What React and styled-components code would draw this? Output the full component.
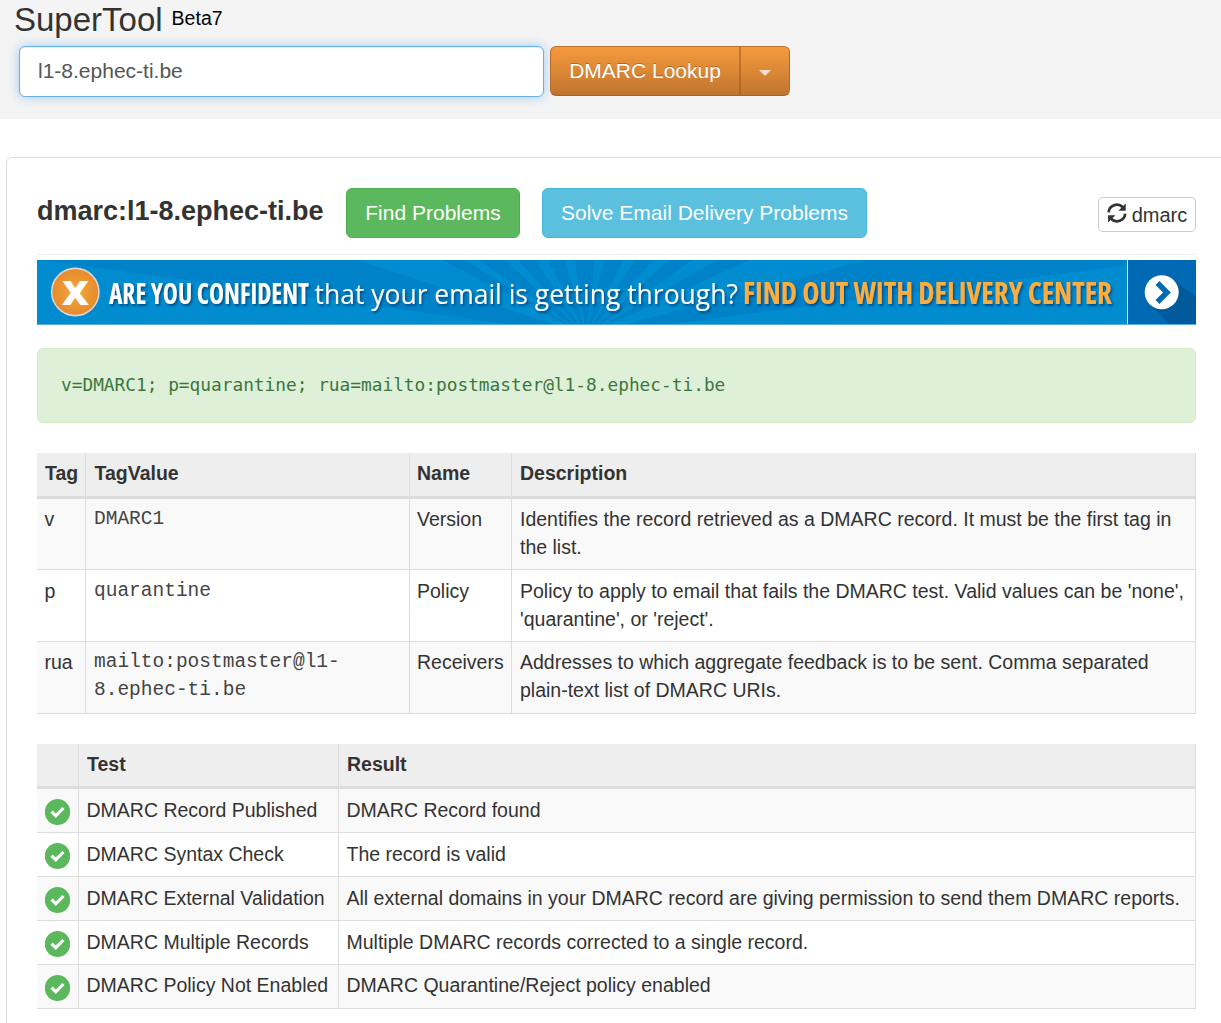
import React, { useLayoutEffect, useRef, useState } from "react";
import styled, { createGlobalStyle } from "styled-components";

const GlobalStyle = createGlobalStyle`
  * { box-sizing: border-box; }
  html, body { margin: 0; padding: 0; background: #fff; overflow: hidden; }
  body { font-family: "Liberation Sans", Arial, sans-serif; font-size: 19.5px; color: #333; }
`;

const Page = styled.div`
  display: flex;
  flex-direction: column;
  height: 1023px;
  overflow: hidden;
`;

const Header = styled.header`
  flex: none;
  height: 119px;
  background: #f4f4f4;
`;

const TitleRow = styled.div`
  display: flex;
  align-items: flex-start;
  gap: 9px;
  height: 46px;
  padding: 2px 0 0 14px;
`;

const Title = styled.h1`
  margin: 0;
  font-size: 33px;
  font-weight: 400;
  line-height: 36px;
`;

const Beta = styled.span`
  color: #000;
  line-height: 32px;
`;

const SearchRow = styled.div`
  display: flex;
  align-items: flex-start;
  gap: 6px;
  padding-left: 19px;
`;

const SearchInput = styled.input`
  width: 525px;
  height: 51px;
  padding: 0 18px 1px;
  border: 1px solid #66afe9;
  border-radius: 6px;
  outline: none;
  background: #fff;
  color: #555;
  font: 21px "Liberation Sans", Arial, sans-serif;
  box-shadow: inset 0 1px 1px rgba(0, 0, 0, 0.075), 0 0 12px rgba(102, 175, 233, 0.6);
`;

const SplitButton = styled.div`
  display: flex;
  width: 240px;
  height: 50px;
  border: 1px solid;
  border-color: #bd732f #b56c2b #a5622a;
  border-radius: 6px;
  overflow: hidden;
  background: linear-gradient(#f79a3c, #c0752f);
`;

const LookupButton = styled.button`
  width: 190px;
  padding: 0;
  border: 0;
  border-right: 2px solid rgba(150, 85, 30, 0.5);
  background: none;
  color: #fff;
  font: 21px "Liberation Sans", Arial, sans-serif;
  text-shadow: 0 -1px 0 rgba(0, 0, 0, 0.25);
`;

const CaretButton = styled.button`
  flex: 1;
  display: flex;
  align-items: center;
  justify-content: center;
  padding: 4px 0 0;
  border: 0;
  background: none;

  &::after {
    content: "";
    border: 6px solid transparent;
    border-top-color: rgba(255, 255, 255, 0.75);
    border-bottom: 0;
  }
`;

const Panel = styled.main`
  flex: 1;
  margin: 38px -10px -10px 6px;
  padding: 30px 34px 0 30px;
  border: 1px solid #ddd;
  border-radius: 6px;
`;

const PanelHead = styled.div`
  display: flex;
  align-items: center;
  height: 50px;
`;

const Domain = styled.h2`
  width: 309px;
  margin: 0;
  padding-bottom: 3px;
  font-size: 27px;
  font-weight: 700;
  white-space: nowrap;
`;

const ActionButton = styled.button`
  width: ${(p) => p.$width}px;
  height: 50px;
  margin-right: 22px;
  padding: 0;
  border: 1px solid ${(p) => (p.$kind === "success" ? "#4cae4c" : "#46b8da")};
  border-radius: 6px;
  background: ${(p) => (p.$kind === "success" ? "#5cb85c" : "#5bc0de")};
  color: #fff;
  font: 21px "Liberation Sans", Arial, sans-serif;
  white-space: nowrap;
`;

const RefreshButton = styled.button`
  display: flex;
  align-items: center;
  justify-content: center;
  gap: 5px;
  width: 98px;
  height: 35px;
  margin: 3px 0 0 auto;
  padding: 0;
  border: 1px solid #ccc;
  border-radius: 5px;
  background: #fff;
  color: #333;
  font: 20px "Liberation Sans", Arial, sans-serif;

  svg { margin-top: -3px; }
  span { padding-top: 1px; }
`;

const Divider = styled.hr`
  height: 1px;
  margin: 16px 0 5px;
  border: 0;
  background: #eee;
`;

const BannerArt = styled.svg`
  display: block;
  width: 1159px;
  height: 65px;
  font-family: "Open Sans", sans-serif;
`;

const BannerLabel = styled.text`
  font-size: ${(p) => p.$size}px;
  font-weight: ${(p) => p.$weight};
  font-stretch: ${(p) => (p.$condensed ? "75%" : "100%")};
  fill: ${(p) => p.$color || "#fff"};
`;

const RecordBox = styled.div`
  display: flex;
  align-items: center;
  height: 75px;
  margin: 23px 0 30px;
  padding: 0 23px 3px;
  border: 1px solid #d6e9c6;
  border-radius: 6px;
  background: #dff0d8;
  color: #3c763d;
  font-family: "DejaVu Sans Mono", monospace;
  font-size: 17.81px;
  white-space: pre;
`;

const Table = styled.div`
  margin-bottom: 30px;
  line-height: 28px;
`;

const Row = styled.div`
  display: grid;
  grid-template-columns: ${(p) => p.$columns};
  height: ${(p) => p.$height}px;
  border-bottom: 1px solid #ddd;
  background: ${(p) => (p.$striped ? "#f9f9f9" : "#fff")};
`;

const HeadRow = styled(Row)`
  border-bottom-width: 3px;
  background: #eee;
  font-weight: 700;
`;

const Cell = styled.div`
  padding: ${(p) => p.$top || 6}px 4px 0 ${(p) => p.$left || 7.5}px;
  border-right: 1px solid #ddd;
  white-space: pre;
`;

const CodeCell = styled(Cell)`
  color: #444;
  font-family: "Liberation Mono", "Courier New", monospace;
`;

const IconCell = styled(Cell)`
  display: flex;
  align-items: flex-start;
  padding: ${(p) => p.$top}px 0 0 8px;
`;

const TAG_COLUMNS = "49px 324px 102px 684px";
const TEST_COLUMNS = "42px 260px 857px";

const tags = [
  { tag: "v", value: "DMARC1", name: "Version", height: 71, top: 6,
    text: "Identifies the record retrieved as a DMARC record. It must be the first tag in\nthe list." },
  { tag: "p", value: "quarantine", name: "Policy", height: 72, top: 7,
    text: "Policy to apply to email that fails the DMARC test. Valid values can be 'none',\n'quarantine', or 'reject'." },
  { tag: "rua", value: "mailto:postmaster@l1-\n8.ephec-ti.be", name: "Receivers", height: 72, top: 6,
    text: "Addresses to which aggregate feedback is to be sent. Comma separated\nplain-text list of DMARC URIs." },
];

const tests = [
  ["DMARC Record Published", "DMARC Record found", 7, 10],
  ["DMARC Syntax Check", "The record is valid", 7, 10],
  ["DMARC External Validation", "All external domains in your DMARC record are giving permission to send them DMARC reports.", 7, 9.5],
  ["DMARC Multiple Records", "Multiple DMARC records corrected to a single record.", 7, 9.5],
  ["DMARC Policy Not Enabled", "DMARC Quarantine/Reject policy enabled", 6, 9.5],
];

// Light sunburst rays: x positions where each ray meets the top edge
const rays = [[320, 405], [428, 442], [468, 481], [498, 511], [528, 538], [558, 567], [586, 598], [616, 632], [655, 680], [712, 830]];

function RefreshIcon() {
  return (
    <svg width="20" height="20" viewBox="0 0 20 20">
      <g fill="none" stroke="#333" strokeWidth="2.7">
        <path d="M1.6 9.3A8.3 8.3 0 0 1 15.8 4.2" />
        <path d="M18.2 10.7A8.3 8.3 0 0 1 4 15.8" />
      </g>
      <path d="M18.7 .5V7.8H11.4ZM1.1 19.5V12.2H8.4Z" fill="#333" />
    </svg>
  );
}

function CheckIcon() {
  return (
    <svg width="25" height="26" viewBox="0 0 25 26">
      <ellipse cx="12.5" cy="13" rx="12.7" ry="13" fill="#5cb85c" />
      <path d="M6.6 12.6l4.2 4.2 7.6-7.8" fill="none" stroke="#fff" strokeWidth="3.2" />
    </svg>
  );
}

// Scales a label horizontally so that it fills the given width
function FitLabel({ x, y, width, children, ...rest }) {
  const ref = useRef(null);
  const [scale, setScale] = useState(1);
  useLayoutEffect(() => {
    const natural = ref.current.getComputedTextLength();
    if (natural) setScale(width / natural);
  }, [width, children]);
  return (
    <BannerLabel ref={ref} transform={`translate(${x} ${y}) scale(${scale} 1)`} {...rest}>
      {children}
    </BannerLabel>
  );
}

function Banner() {
  return (
    <BannerArt viewBox="0 0 1159 65">
      <defs>
        <radialGradient id="badge">
          <stop offset="0" stopColor="#f6a83e" />
          <stop offset="1" stopColor="#e58a2c" />
        </radialGradient>
        <filter id="shade" x="-5%" y="-30%" width="110%" height="170%">
          <feDropShadow dx="1.5" dy="2" stdDeviation="1.2" floodColor="#003a70" floodOpacity="0.75" />
        </filter>
      </defs>
      <rect width="1159" height="65" fill="#0082c8" />
      <g fill="#008ccf">
        <path d="M0 0H5L549 75H0ZM549 75L1091 5V65H600Z" />
        {rays.map(([a, b]) => (
          <path key={a} d={`M${a} 0H${b}L549 75Z`} />
        ))}
      </g>
      <rect x="1091" width="68" height="65" fill="#0069b4" />
      <path d="M1137 20L1159 37V65H1134L1112 44Z" fill="#005a9c" />
      <rect x="1090" width="1" height="65" fill="#e3f2fa" />
      <rect y="64" width="1159" height="1" fill="#55ade0" />
      <circle cx="38.3" cy="32" r="23.6" fill="url(#badge)" stroke="#ddd3ca" strokeWidth="1.6" />
      <FitLabel x={25} y={44.5} width={27} $size={34} $weight={800}>X</FitLabel>
      <g filter="url(#shade)">
        <FitLabel x={72} y={44} width={200} $size={28} $weight={700} $condensed>ARE YOU CONFIDENT</FitLabel>
        <FitLabel x={277.5} y={44} width={423.5} $size={27} $weight={400}>that your email is getting through?</FitLabel>
        <FitLabel x={706} y={44} width={369} $size={31} $weight={700} $condensed $color="#fbad3c">FIND OUT WITH DELIVERY CENTER</FitLabel>
      </g>
      <circle cx="1124.7" cy="32.3" r="17" fill="#fff" />
      <path d="M1120.5 23l9.5 9.5-9.5 9.5" fill="none" stroke="#0069b4" strokeWidth="5.4" />
    </BannerArt>
  );
}

export default function App() {
  return (
    <>
      <GlobalStyle />
      <Page>
        <Header>
          <TitleRow>
            <Title>SuperTool</Title>
            <Beta>Beta7</Beta>
          </TitleRow>
          <SearchRow>
            <SearchInput defaultValue="l1-8.ephec-ti.be" />
            <SplitButton>
              <LookupButton>DMARC Lookup</LookupButton>
              <CaretButton aria-label="More lookups" />
            </SplitButton>
          </SearchRow>
        </Header>
        <Panel>
          <PanelHead>
            <Domain>dmarc:l1-8.ephec-ti.be</Domain>
            <ActionButton $kind="success" $width={174}>Find Problems</ActionButton>
            <ActionButton $kind="info" $width={325}>Solve Email Delivery Problems</ActionButton>
            <RefreshButton>
              <RefreshIcon />
              <span>dmarc</span>
            </RefreshButton>
          </PanelHead>
          <Divider />
          <Banner />
          <RecordBox>v=DMARC1; p=quarantine; rua=mailto:postmaster@l1-8.ephec-ti.be</RecordBox>
          <Table>
            <HeadRow $columns={TAG_COLUMNS} $height={46}>
              <Cell $left={8}>Tag</Cell>
              <Cell $left={8.5}>TagValue</Cell>
              <Cell $left={7}>Name</Cell>
              <Cell $left={8}>Description</Cell>
            </HeadRow>
            {tags.map((t, i) => (
              <Row key={t.tag} $columns={TAG_COLUMNS} $height={t.height} $striped={i % 2 === 0}>
                <Cell $top={t.top}>{t.tag}</Cell>
                <CodeCell $top={t.top} $left={8}>{t.value}</CodeCell>
                <Cell $top={t.top} $left={7}>{t.name}</Cell>
                <Cell $top={t.top} $left={8}>{t.text}</Cell>
              </Row>
            ))}
          </Table>
          <Table>
            <HeadRow $columns={TEST_COLUMNS} $height={45}>
              <Cell />
              <Cell $left={8}>Test</Cell>
              <Cell $left={8}>Result</Cell>
            </HeadRow>
            {tests.map(([name, result, top, iconTop], i) => (
              <Row key={name} $columns={TEST_COLUMNS} $height={44} $striped={i % 2 === 0}>
                <IconCell $top={iconTop}>
                  <CheckIcon />
                </IconCell>
                <Cell $top={top}>{name}</Cell>
                <Cell $top={top}>{result}</Cell>
              </Row>
            ))}
          </Table>
        </Panel>
      </Page>
    </>
  );
}
